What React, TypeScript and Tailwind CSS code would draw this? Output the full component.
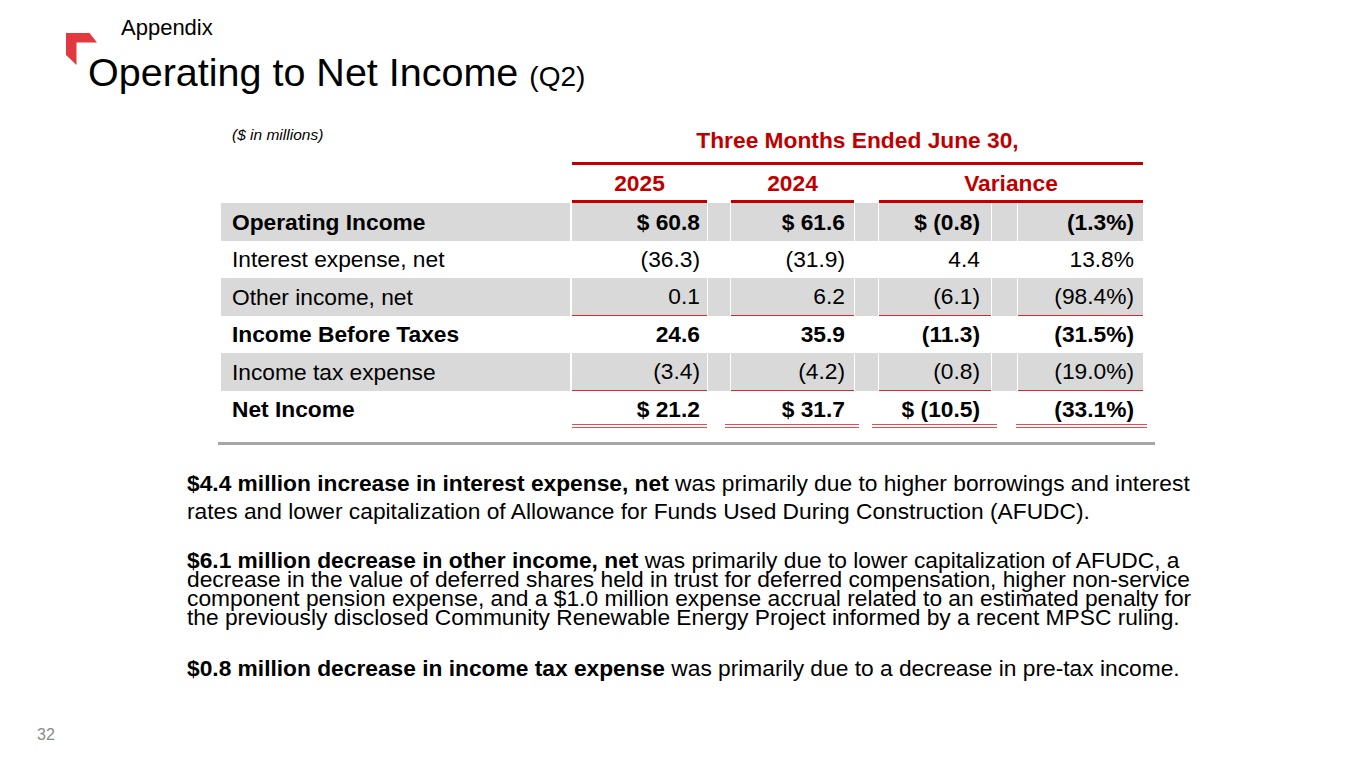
import React from 'react'

type Row = {
  label: string
  values: [string, string, string, string]
  bold?: boolean
  shaded?: boolean
  underline?: 'single' | 'double'
}

const ROWS: Row[] = [
  { label: 'Operating Income', values: ['$ 60.8', '$ 61.6', '$ (0.8)', '(1.3%)'], bold: true, shaded: true },
  { label: 'Interest expense, net', values: ['(36.3)', '(31.9)', '4.4', '13.8%'] },
  { label: 'Other income, net', values: ['0.1', '6.2', '(6.1)', '(98.4%)'], shaded: true, underline: 'single' },
  { label: 'Income Before Taxes', values: ['24.6', '35.9', '(11.3)', '(31.5%)'], bold: true },
  { label: 'Income tax expense', values: ['(3.4)', '(4.2)', '(0.8)', '(19.0%)'], shaded: true, underline: 'single' },
  { label: 'Net Income', values: ['$ 21.2', '$ 31.7', '$ (10.5)', '(33.1%)'], bold: true, underline: 'double' },
]

// value column widths / padding, spacer widths between them
const COLS = [
  { w: 'w-[135px]', pr: 'pr-[7px]', dbl: 'left-0 right-0' },
  { w: 'w-[123px]', pr: 'pr-[9px]', dbl: 'left-[-6px] right-[-5px]' },
  { w: 'w-[112px]', pr: 'pr-[11px]', dbl: 'left-[-7px] right-[-6px]' },
  { w: 'w-[125px]', pr: 'pr-[9px]', dbl: 'left-[-2px] right-[-4px]' },
]
const SPACERS = ['w-[22px]', 'w-[23px]', 'w-[25px]']

function Logo() {
  return (
    <svg className="absolute left-[66px] top-[33px]" width="31" height="32" viewBox="0 0 31 32">
      <polygon points="0,0 23.5,0 31,9.5 10.5,9.5 10.5,32 0,22" fill="#e2393e" />
    </svg>
  )
}

function TableRow({ row }: { row: Row }) {
  const bg = row.shaded ? 'bg-[#d9d9d9]' : 'bg-white'
  const weight = row.bold ? 'font-bold' : 'font-normal'
  return (
    <div className="flex h-[37.5px] gap-[1px]">
      <div className={`${bg} w-[349px] mr-[1px] flex items-center pl-[11px] ${weight}`}>{row.label}</div>
      {row.values.map((v, i) => (
        <React.Fragment key={i}>
          <div
            className={`${bg} ${COLS[i].w} ${COLS[i].pr} relative flex items-center justify-end ${weight} ${
              row.underline === 'single' ? 'border-b border-[#d42a2a]' : ''
            }`}
          >
            {v}
            {row.underline === 'double' && (
              <div className={`absolute ${COLS[i].dbl} bottom-0 h-[4px] border-y border-[#dc5050]`} />
            )}
          </div>
          {i < 3 && <div className={`${bg} ${SPACERS[i]}`} />}
        </React.Fragment>
      ))}
    </div>
  )
}

export default function App() {
  return (
    <div
      className="relative w-[1365px] h-[768px] bg-white text-black overflow-hidden"
      style={{ fontFamily: "'Liberation Sans', Arial, sans-serif" }}
    >
      <Logo />
      <div className="pl-[121px] pt-[15px] text-[22px] leading-[26px]">Appendix</div>
      <h1 className="pl-[88px] mt-[8px] text-[39.5px] leading-[46px] whitespace-nowrap">
        Operating to Net Income <span className="text-[28px]">(Q2)</span>
      </h1>

      {/* table */}
      <div className="ml-[221px] mt-[27px] w-[922px] text-[22.75px] leading-[26px] whitespace-nowrap">
        <div className="flex">
          <div className="w-[351px] pl-[11px] -mt-[1px] text-[15.5px] leading-[18px] italic">($ in millions)</div>
          <div className="w-[571px]">
            <div className="text-center font-bold text-[#c00000]">Three Months Ended June 30,</div>
            <div className="mt-[9px] h-[3px] bg-[#c00000]" />
          </div>
        </div>
        <div className="flex h-[38px] font-bold text-[#c00000]">
          <div className="w-[351px]" />
          <div className="w-[135px] flex items-end justify-center pb-[4px] border-b-[3px] border-[#c00000]">2025</div>
          <div className="w-[24px]" />
          <div className="w-[123px] flex items-end justify-center pb-[4px] border-b-[3px] border-[#c00000]">2024</div>
          <div className="w-[25px]" />
          <div className="w-[264px] flex items-end justify-center pb-[4px] border-b-[3px] border-[#c00000]">Variance</div>
        </div>
        {ROWS.map((r) => (
          <TableRow key={r.label} row={r} />
        ))}
        <div className="-ml-[3px] mt-[14px] w-[937px] h-[3px] bg-[#a6a6a6]" />
      </div>

      {/* commentary */}
      <div className="ml-[187px] mt-[24px] text-[22.75px] whitespace-nowrap">
        <p className="leading-[28px]">
          <b>$4.4 million increase in interest expense, net</b> was primarily due to higher borrowings and interest
          <br />
          rates and lower capitalization of Allowance for Funds Used During Construction (AFUDC).
        </p>
        <p className="mt-[25.5px] leading-[19px]">
          <b>$6.1 million decrease in other income, net</b> was primarily due to lower capitalization of AFUDC, a
          <br />
          decrease in the value of deferred shares held in trust for deferred compensation, higher non-service
          <br />
          component pension expense, and a $1.0 million expense accrual related to an estimated penalty for
          <br />
          the previously disclosed Community Renewable Energy Project informed by a recent MPSC ruling.
        </p>
        <p className="mt-[27.5px] leading-[28px]">
          <b>$0.8 million decrease in income tax expense</b> was primarily due to a decrease in pre-tax income.
        </p>
      </div>
      <div className="ml-[37px] mt-[43px] text-[16px] leading-[20px] text-[#8a8a8a]">32</div>
    </div>
  )
}
